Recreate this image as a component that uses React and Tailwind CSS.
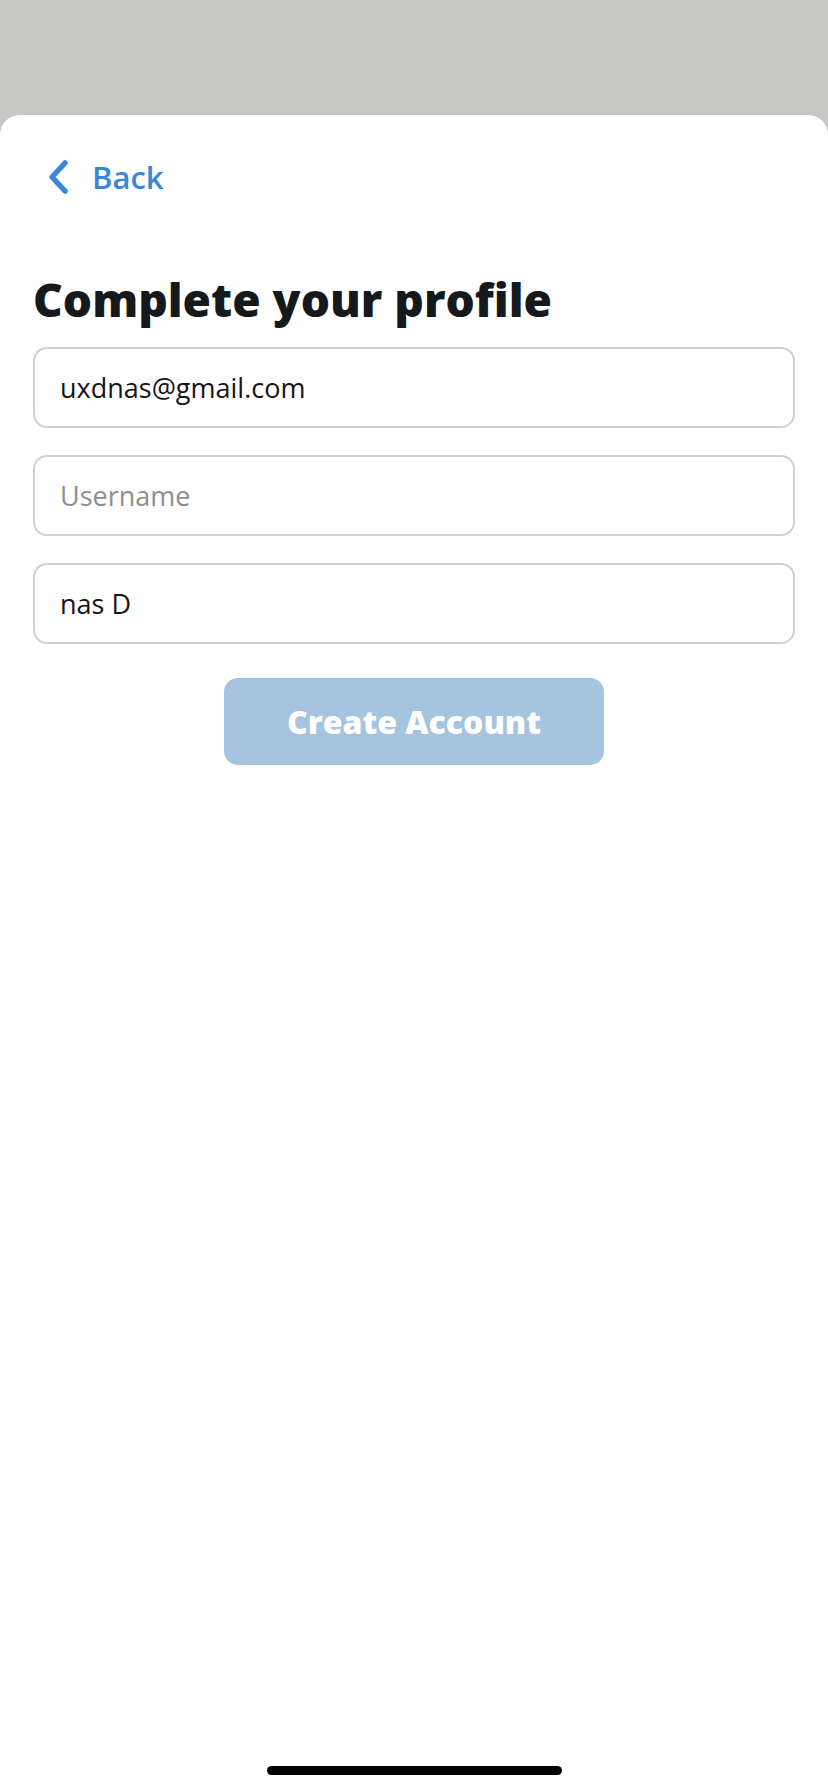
import React, { useState } from 'react';

const ChevronLeft = () => (
  <svg width="24" height="36" viewBox="0 0 24 36" fill="none">
    <path d="M19 4 L6 18 L19 32" stroke="#3a87d8" strokeWidth="5.5" strokeLinecap="round" strokeLinejoin="round" />
  </svg>
);

const App = () => {
  const [formData, setFormData] = useState({
    email: 'uxdnas@gmail.com',
    username: '',
    name: 'nas D',
  });

  const inputClass =
    'w-full h-[81px] rounded-[14px] border-2 border-[#d0d0d0] bg-white px-[25px] text-[27px] text-[#151515] placeholder:text-[#8e8e8e] outline-none';

  return (
    <div className="h-[1792px] w-full flex flex-col bg-linear-to-b from-[#c8c8c6] to-[#b6b7b4] font-['Open_Sans',sans-serif]">
      <div className="h-[115px] shrink-0" />
      <div className="flex-1 bg-white rounded-t-[20px] px-[33px] pt-[44px] flex flex-col">
        <button className="flex items-center gap-[22px] ml-[13px] h-[36px] self-start">
          <ChevronLeft />
          <span className="text-[31px] font-semibold text-[#3a87d8] leading-none">Back</span>
        </button>

        <h1 className="mt-[76px] text-[46px] font-extrabold text-[#15191c] leading-[56px]">
          Complete your profile
        </h1>

        <form className="mt-[20px] flex flex-col gap-[27px]" onSubmit={(e) => e.preventDefault()}>
          <input
            type="email"
            value={formData.email}
            onChange={(e) => setFormData({ ...formData, email: e.target.value })}
            className={inputClass}
          />
          <input
            type="text"
            placeholder="Username"
            value={formData.username}
            onChange={(e) => setFormData({ ...formData, username: e.target.value })}
            className={inputClass}
          />
          <input
            type="text"
            value={formData.name}
            onChange={(e) => setFormData({ ...formData, name: e.target.value })}
            className={inputClass}
          />
          <button
            type="submit"
            className="self-center mt-[7px] w-[380px] h-[87px] rounded-[14px] bg-[#a4c4df] text-white text-[32px] font-extrabold">
            Create Account
          </button>
        </form>

        <div className="mt-auto mb-[17px] self-center w-[295px] h-[9px] rounded-full bg-black" />
      </div>
    </div>
  );
};

export default App;
